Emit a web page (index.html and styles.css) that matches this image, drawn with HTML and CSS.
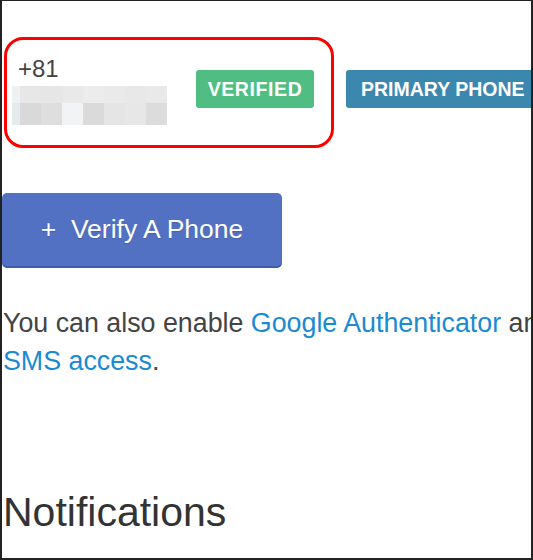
FILE: index.html
```html
<!DOCTYPE html>
<html>
<head>
<meta charset="utf-8">
<link rel="stylesheet" href="styles.css">
</head>
<body>
<div class="frame">
  <div class="phone-row">
    <div class="highlight">
      <div class="phone">
        <div class="code">+81</div>
        <div class="masked">
          <span class="c1"></span><span class="c2"></span><span class="c3"></span><span class="c4"></span><span class="c5"></span><span class="c6"></span><span class="c7"></span><span class="c8"></span>
          <span class="d1"></span><span class="d2"></span><span class="d3"></span><span class="d4"></span><span class="d5"></span><span class="d6"></span><span class="d7"></span><span class="d8"></span>
        </div>
      </div>
      <span class="badge badge-verified">VERIFIED</span>
    </div>
    <span class="badge badge-primary">PRIMARY PHONE</span>
  </div>

  <button class="btn-verify">+&nbsp;&nbsp;Verify A Phone</button>

  <p class="note">You can also enable <a href="#">Google Authenticator</a> and<br><a href="#">SMS access</a>.</p>

  <h2 class="heading">Notifications</h2>
</div>
</body>
</html>
```

FILE: styles.css
```css
html, body {
  margin: 0;
  padding: 0;
  background: #fff;
}

.frame {
  width: 533px;
  height: 560px;
  box-sizing: border-box;
  border: 2px solid #222;
  border-top-width: 1px;
  overflow: hidden;
  font-family: "Liberation Sans", Arial, sans-serif;
  color: #444;
  background: #fff;
}

.phone-row {
  display: flex;
  align-items: flex-start;
  margin-top: 36px;
  padding-left: 2px;
  white-space: nowrap;
}

.highlight {
  box-sizing: border-box;
  width: 330px;
  height: 111px;
  border: 3px solid #ff0000;
  border-radius: 19px;
  display: flex;
  align-items: flex-start;
  padding-left: 5px;
  padding-top: 15px;
  flex: none;
}

.phone {
  width: 154px;
  flex: none;
}

.code {
  font-size: 24px;
  line-height: 28px;
  padding-left: 6px;
  color: #444;
}

.masked {
  display: grid;
  grid-template-columns: 8px 21px 21px 21px 21px 21px 21px 21px;
  grid-template-rows: 17px 22px;
  margin-top: 3px;
  width: 155px;
}

.masked span { display: block; }
.c1 { background: #eef1f2; }
.c2 { background: #e7e7e7; }
.c3 { background: #e6e6e6; }
.c4 { background: #e9e9e9; }
.c5 { background: #ececec; }
.c6 { background: #eaeaea; }
.c7 { background: #e8e8e8; }
.c8 { background: #e9e9e9; }
.d1 { background: #e5eaec; }
.d2 { background: #d9d9d9; }
.d3 { background: #dedede; }
.d4 { background: #f1f3f4; }
.d5 { background: #dadada; }
.d6 { background: #e5e5e5; }
.d7 { background: #e7e7e7; }
.d8 { background: #dcdcdc; }

.badge {
  display: inline-flex;
  align-items: center;
  box-sizing: border-box;
  height: 38px;
  font-weight: bold;
  font-size: 19.5px;
  color: #fff;
  border-radius: 3px;
  flex: none;
}

.badge-verified {
  width: 118px;
  justify-content: center;
  background: #50be82;
  margin-left: 30px;
  margin-top: 15px;
  letter-spacing: 0.6px;
}

.badge-primary {
  background: #3c87ae;
  padding: 0 12px 0 15px;
  margin-left: 12px;
  margin-top: 33px;
}

.btn-verify {
  display: flex;
  align-items: center;
  justify-content: center;
  width: 280px;
  height: 73px;
  margin: 45px 0 0 0;
  padding: 0;
  border: none;
  border-radius: 5px;
  background: #5271c3;
  box-shadow: 0 2px 0 #3e5ca8;
  color: #fff;
  font-family: "Liberation Sans", Arial, sans-serif;
  font-size: 26.5px;
  text-shadow: 0 1px 1px rgba(0, 0, 0, 0.15);
}

.note {
  margin: 39px 0 0 1px;
  font-size: 26.8px;
  line-height: 37.5px;
  color: #444;
  white-space: nowrap;
}

.note a {
  color: #1a8ad2;
  text-decoration: none;
}

.heading {
  margin: 110px 0 0 1px;
  font-size: 41px;
  line-height: 45px;
  font-weight: normal;
  color: #333;
}
```
